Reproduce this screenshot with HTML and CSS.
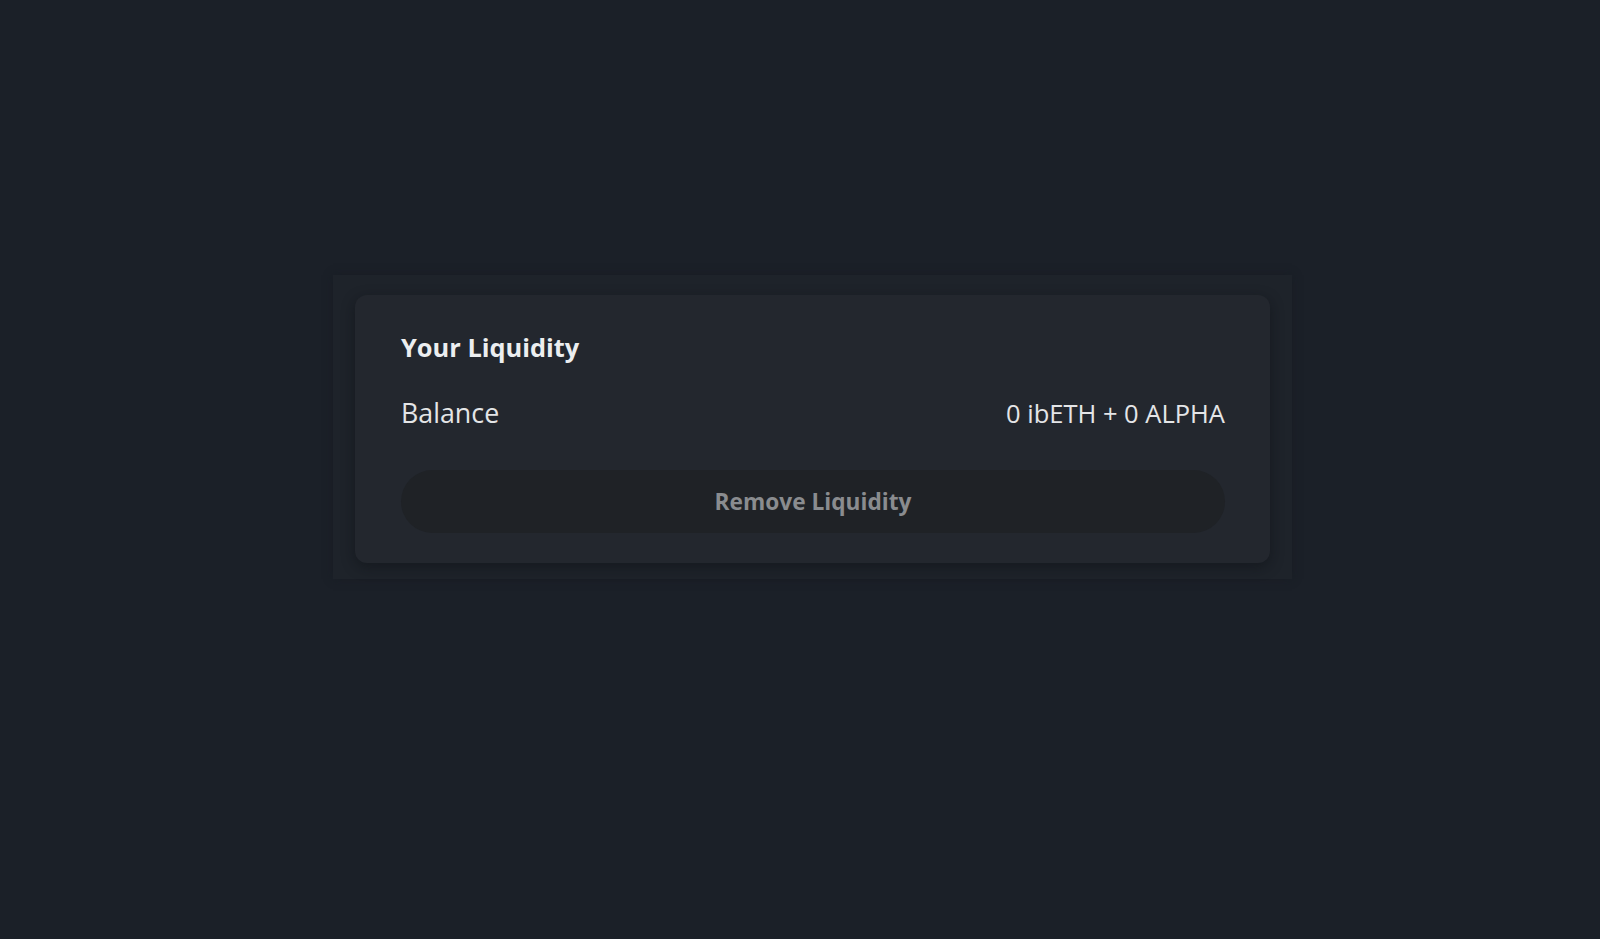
FILE: index.html
```html
<!DOCTYPE html>
<html lang="en">
<head>
<meta charset="utf-8">
<title>Your Liquidity</title>
<link rel="stylesheet" href="styles.css">
</head>
<body>
<main class="page">
  <section class="panel">
    <div class="card">
      <h2 class="card-title">Your Liquidity</h2>
      <div class="row">
        <span class="row-label">Balance</span>
        <span class="row-value">0 ibETH + 0 ALPHA</span>
      </div>
      <button class="btn-remove" type="button" disabled>Remove Liquidity</button>
    </div>
  </section>
</main>
</body>
</html>
```

FILE: styles.css
```css
html, body {
  margin: 0;
  padding: 0;
  height: 100%;
}

body {
  background: #1b2028;
  font-family: "Open Sans", "Noto Sans", sans-serif;
  color: #e6e7e9;
}

.page {
  display: flex;
  justify-content: center;
  align-items: flex-start;
  padding: 275px 0 0 25px;
  box-sizing: border-box;
  min-height: 100%;
}

.panel {
  padding: 20px 22px 16px 22px;
  background: #1e232a;
  box-shadow: 0 0 8px rgba(22, 26, 32, 0.5);
}

.card {
  width: 915px;
  box-sizing: border-box;
  padding: 36px 45px 30px 46px;
  background: #23272e;
  border-radius: 12px;
  box-shadow: 0 4px 14px rgba(12, 14, 18, 0.45);
  display: flex;
  flex-direction: column;
}

.card-title {
  margin: 0;
  font-size: 25.4px;
  line-height: 32px;
  font-weight: 700;
  color: #eceef0;
}

.row {
  display: flex;
  justify-content: space-between;
  align-items: center;
  margin-top: 34px;
  font-size: 26px;
  line-height: 32px;
  color: #e4e5e7;
}

.row-label {
  font-size: 26.8px;
}

.row-value {
  font-size: 25.5px;
}

.btn-remove {
  margin-top: 41px;
  height: 63px;
  border: none;
  border-radius: 32px;
  background: #1f2226;
  color: #8a8c8f;
  font-family: inherit;
  font-size: 22.7px;
  font-weight: 700;
  cursor: default;
  display: flex;
  align-items: center;
  justify-content: center;
}
```
